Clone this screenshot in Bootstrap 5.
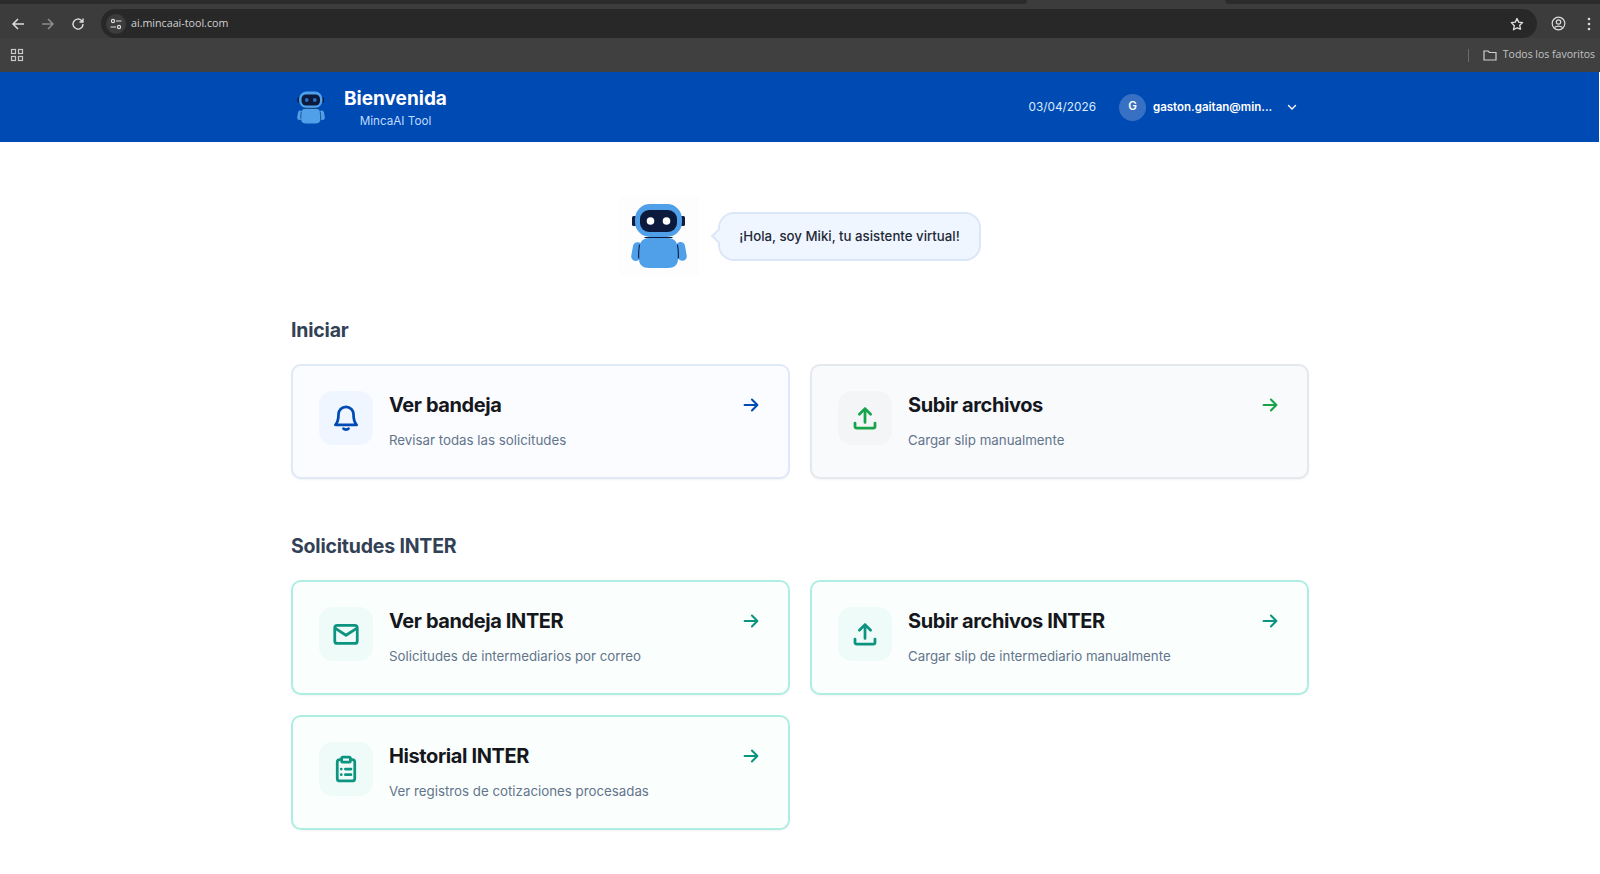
<!DOCTYPE html>
<html lang="es">
<head>
    <meta charset="UTF-8">
    <meta name="viewport" content="width=device-width, initial-scale=1">
    <title>MincaAI Tool</title>
    <link href="https://cdn.jsdelivr.net/npm/bootstrap@5.3.0/dist/css/bootstrap.min.css" rel="stylesheet">
    <style>
        body { font-family: "Inter", "Liberation Sans", sans-serif; background: #fff; height: 874px; overflow: hidden; }

        /* barra del navegador */
        .chrome-tabs { height: 9px; background: #3c3c3c; }
        .chrome-tab-off { height: 4px; background: #2b2b2b; }
        .tab-left { width: 1027px; border-bottom-right-radius: 6px; }
        .tab-right { width: 375px; border-bottom-left-radius: 6px; }
        .chrome-toolbar { height: 29px; background: #3c3c3c; padding-left: 3px; padding-right: 9px; }
        .chrome-bookmarks { height: 34px; background: #404040; padding-left: 10px; padding-right: 5px; font-family: "Open Sans", sans-serif; font-size: 10.500px; color: #c4c4c4; }
        .chrome-btn { width: 30px; display: flex; justify-content: center; color: #dcdcdc; }
        .chrome-url { width: 1436px; height: 29px; background: #282828; border-radius: 15px; margin-left: 8px; padding: 0 13px 0 5px; font-family: "Open Sans", sans-serif; font-size: 10.700px; color: #d2d2d2; }
        .chrome-tune { width: 20px; height: 20px; border-radius: 50%; background: #3c3c3c; margin-right: 5px; }
        .chrome-sep { width: 1px; height: 13px; background: #6a6a6a; margin-right: 14px; }
        .chrome-kebab { margin-left: 21px; }
        .folder-gap { margin-right: 6px; }

        /* cabecera */
        .top-header { height: 70px; background: #004ab3; color: #fff; margin-right: 1px; }
        .top-inner { width: 1018px; margin-left: 291px; padding-right: 11px; }
        .brand-robot { margin-right: 13px; color: #2f6dc0; }
        .brand-text { margin-top: 2px; }
        .brand-title { font-size: 19px; font-weight: 700; line-height: 26px; }
        .brand-sub { font-size: 11.700px; line-height: 17px; margin-top: 1px; color: #bfdbfe; }
        .top-date { font-size: 11.800px; color: #dbeafe; margin-right: 23px; margin-top: 2px; }
        .avatar-circle { width: 27px; height: 27px; border-radius: 50%; background: rgba(255, 255, 255, .22); font-size: 11.500px; font-weight: 600; }
        .user-mail { font-size: 11.500px; font-weight: 600; width: 120px; margin-left: 7px; margin-right: 13px; margin-top: 2px; white-space: nowrap; }

        /* contenido */
        .page-wrap { width: 1018px; margin-left: 291px; padding-top: 55px; }
        .miki-row { margin-bottom: 41px; gap: 19px; }
        .miki-box { width: 80px; height: 78px; background: #fdfdfd; color: #fff; }
        .miki-bubble { position: relative; height: 49px; width: 263px; padding-top: 1px; background: #eff6ff; border: 2px solid #dbe7f8; border-radius: 16px; font-size: 13.250px; font-weight: 500; color: #1f2937; }
        .miki-bubble::before { content: ""; position: absolute; left: -7px; top: 17px; width: 10px; height: 10px; background: #eff6ff; border-left: 2px solid #dbe7f8; border-bottom: 2px solid #dbe7f8; transform: rotate(45deg); }
        .section-title { font-size: 19.500px; font-weight: 700; letter-spacing: -.2px; line-height: 28px; color: #334155; margin: 0 0 20px; }
        .section-gap { margin-top: 53px; }
        .tiles { display: grid; grid-template-columns: 499px 499px; gap: 20px; }
        .tile { border-width: 2px; border-radius: 10px; box-shadow: 0 1px 2px rgba(15, 23, 42, .05); height: 115px; }
        .tile .card-body { padding: 25px 26px 26px; gap: 16px; }
        .tile-blue { background: #fafcff; border-color: #dfe9f8; }
        .tile-gray { background: #f8fafc; border-color: #e5e8ed; }
        .tile-teal { background: #fafffe; border-color: #aeeee2; }
        .tile-icon { width: 54px; height: 54px; border-radius: 14px; flex-shrink: 0; }
        .tile-blue .tile-icon { background: #f0f6ff; color: #004ab3; }
        .tile-gray .tile-icon { background: #f4f5f7; color: #16a34a; }
        .tile-teal .tile-icon { background: #eefbf8; color: #0d9480; }
        .tile-head { font-size: 20px; font-weight: 700; line-height: 28px; color: #15171c; margin: 0 0 10.500px; letter-spacing: -.4px; }
        .tile-desc { font-size: 13.300px; line-height: 21px; color: #64748b; margin: 0; }
        .tile-arrow { margin-top: 3px; }
        .tile-blue .tile-arrow { color: #004ab3; }
        .tile-gray .tile-arrow { color: #16a34a; }
        .tile-teal .tile-arrow { color: #0d9480; }
    </style>
</head>
<body>
<svg width="0" height="0" class="d-block">
    <symbol id="robot" viewBox="1 0 80 78">
        <rect x="14" y="19" width="6" height="10" rx="1.500" fill="#0f1d3f"/>
        <rect x="61" y="19" width="6" height="10" rx="1.500" fill="#0f1d3f"/>
        <rect x="17" y="7" width="47" height="33" rx="15" fill="#4f9fe9"/>
        <rect x="22" y="13" width="37" height="22" rx="9" fill="#0c1a3d"/>
        <circle cx="32.500" cy="24" r="3.800" fill="currentColor"/>
        <circle cx="48.500" cy="24" r="3.800" fill="currentColor"/>
        <rect x="14" y="45" width="9" height="19" rx="4.500" transform="rotate(10 18 55)" fill="#4f9fe9"/>
        <rect x="59" y="45" width="9" height="19" rx="4.500" transform="rotate(-10 63 55)" fill="#4f9fe9"/>
        <path d="M31 41h19c7 0 10 5 10 12v9c0 6-4 9-10 9H31c-6 0-10-3-10-9v-9c0-7 3-12 10-12z" fill="#4f9fe9"/>
        <path d="M27 40.500h27" stroke="#0c1a3d" stroke-width="1.200" stroke-linecap="round"/>
        <path d="M21.500 48c-.8 4-1 8-.8 13M59.500 48c.8 4 1 8 .8 13" fill="none" stroke="#0c1a3d" stroke-width="1.100" stroke-linecap="round"/>
    </symbol>
    <symbol id="arrow" viewBox="0 0 24 24">
        <path d="M5 12h14M13 6l6 6-6 6" fill="none" stroke="currentColor" stroke-width="2.200" stroke-linecap="round" stroke-linejoin="round"/>
    </symbol>
    <symbol id="upload" viewBox="0 0 24 24">
        <path d="M4 16v2.500A1.500 1.500 0 0 0 5.500 20h13a1.500 1.500 0 0 0 1.500-1.500V16M12 15.500V4.500M7.500 9 12 4.500 16.500 9" fill="none" stroke="currentColor" stroke-width="2.200" stroke-linecap="round" stroke-linejoin="round"/>
    </symbol>
</svg>

<div class="chrome-tabs d-flex justify-content-between">
    <div class="chrome-tab-off tab-left"></div>
    <div class="chrome-tab-off tab-right"></div>
</div>
<div class="chrome-toolbar d-flex align-items-center">
    <span class="chrome-btn"><svg width="14" height="14" viewBox="0 0 14 14"><path d="M13 7H2M7 2 2 7l5 5" fill="none" stroke="currentColor" stroke-width="1.500"/></svg></span>
    <span class="chrome-btn opacity-50"><svg width="14" height="14" viewBox="0 0 14 14"><path d="M1 7h11M7 2l5 5-5 5" fill="none" stroke="currentColor" stroke-width="1.500"/></svg></span>
    <span class="chrome-btn"><svg width="14" height="14" viewBox="0 0 14 14"><path d="M12 7a5 5 0 1 1-1.500-3.500L12 5M12 1.500V5H8.500" fill="none" stroke="currentColor" stroke-width="1.400"/></svg></span>
    <div class="chrome-url d-flex align-items-center">
        <span class="chrome-tune d-flex align-items-center justify-content-center">
            <svg width="12" height="12" viewBox="0 0 12 12"><g fill="none" stroke="#dcdcdc" stroke-width="1.200"><circle cx="3" cy="3" r="1.600"/><path d="M6 3h5.500M.5 9H6"/><circle cx="9" cy="9" r="1.600"/></g></svg>
        </span>
        <span>ai.mincaai-tool.com</span>
        <svg class="ms-auto" width="14" height="14" viewBox="0 0 14 14"><path d="m7 1.500 1.700 3.600 3.900.5-2.900 2.700.8 3.900L7 10.800l-3.500 1.900.8-3.900L1.400 5.600l3.900-.5z" fill="none" stroke="#e2e2e2" stroke-width="1.300" stroke-linejoin="round"/></svg>
    </div>
    <svg class="ms-auto" width="15" height="15" viewBox="0 0 15 15"><g fill="none" stroke="#dcdcdc" stroke-width="1.200"><circle cx="7.500" cy="7.500" r="6.300"/><circle cx="7.500" cy="6" r="2.200"/><path d="M3.500 11.500c2-1.800 6-1.800 8 0"/></g></svg>
    <svg class="chrome-kebab" width="4" height="14" viewBox="0 0 4 14"><g fill="#dcdcdc"><circle cx="2" cy="2" r="1.300"/><circle cx="2" cy="7" r="1.300"/><circle cx="2" cy="12" r="1.300"/></g></svg>
</div>
<div class="chrome-bookmarks d-flex align-items-center">
    <svg width="14" height="14" viewBox="0 0 14 14"><g fill="none" stroke="#c8c8c8" stroke-width="1.200"><rect x="1.500" y="1.500" width="4" height="4"/><rect x="8.500" y="1.500" width="4" height="4"/><rect x="1.500" y="8.500" width="4" height="4"/><rect x="8.500" y="8.500" width="4" height="4"/></g></svg>
    <span class="chrome-sep ms-auto"></span>
    <svg class="folder-gap" width="14" height="12" viewBox="0 0 14 12"><path d="M1 2h4l1.500 1.500H13V11H1z" fill="none" stroke="#d0d0d0" stroke-width="1.200"/></svg>
    <span>Todos los favoritos</span>
</div>

<header class="top-header d-flex align-items-center">
    <div class="top-inner d-flex align-items-center">
        <svg class="brand-robot" width="40" height="39"><use href="#robot"/></svg>
        <div class="brand-text text-center">
            <div class="brand-title">Bienvenida</div>
            <div class="brand-sub">MincaAI Tool</div>
        </div>
        <div class="ms-auto d-flex align-items-center">
            <span class="top-date">03/04/2026</span>
            <span class="avatar-circle d-flex align-items-center justify-content-center">G</span>
            <span class="user-mail">gaston.gaitan@min...</span>
            <svg width="12" height="12" viewBox="0 0 12 12"><path d="m2.500 4.500 3.500 3.500 3.500-3.500" fill="none" stroke="#fff" stroke-width="1.400" stroke-linecap="round" stroke-linejoin="round"/></svg>
        </div>
    </div>
</header>

<main class="page-wrap">
    <div class="miki-row d-flex align-items-center justify-content-center">
        <div class="miki-box">
            <svg class="d-block" width="80" height="78"><use href="#robot"/></svg>
        </div>
        <div class="miki-bubble d-flex align-items-center justify-content-center">¡Hola, soy Miki, tu asistente virtual!</div>
    </div>

    <h2 class="section-title">Iniciar</h2>
    <div class="tiles">
        <div class="card tile tile-blue">
            <div class="card-body d-flex">
                <div class="tile-icon d-flex align-items-center justify-content-center">
                    <svg width="30" height="30" viewBox="0 0 24 24"><path d="M12 3a6 6 0 0 0-6 6c0 5-1 7-2.500 8.500h17C19 16 18 14 18 9a6 6 0 0 0-6-6zM10 20.500c.8 1 3.200 1 4 0" fill="none" stroke="currentColor" stroke-width="2.200" stroke-linecap="round" stroke-linejoin="round"/></svg>
                </div>
                <div class="flex-grow-1">
                    <h3 class="tile-head">Ver bandeja</h3>
                    <p class="tile-desc">Revisar todas las solicitudes</p>
                </div>
                <svg class="tile-arrow" width="22" height="22"><use href="#arrow"/></svg>
            </div>
        </div>
        <div class="card tile tile-gray">
            <div class="card-body d-flex">
                <div class="tile-icon d-flex align-items-center justify-content-center">
                    <svg width="30" height="30"><use href="#upload"/></svg>
                </div>
                <div class="flex-grow-1">
                    <h3 class="tile-head">Subir archivos</h3>
                    <p class="tile-desc">Cargar slip manualmente</p>
                </div>
                <svg class="tile-arrow" width="22" height="22"><use href="#arrow"/></svg>
            </div>
        </div>
    </div>

    <h2 class="section-title section-gap">Solicitudes INTER</h2>
    <div class="tiles">
        <div class="card tile tile-teal">
            <div class="card-body d-flex">
                <div class="tile-icon d-flex align-items-center justify-content-center">
                    <svg width="30" height="30" viewBox="0 0 24 24"><rect x="3" y="5" width="18" height="14.500" rx="2" fill="none" stroke="currentColor" stroke-width="2.200"/><path d="m3.500 7.500 8.500 5.500 8.500-5.500" fill="none" stroke="currentColor" stroke-width="2.200" stroke-linejoin="round"/></svg>
                </div>
                <div class="flex-grow-1">
                    <h3 class="tile-head">Ver bandeja INTER</h3>
                    <p class="tile-desc">Solicitudes de intermediarios por correo</p>
                </div>
                <svg class="tile-arrow" width="22" height="22"><use href="#arrow"/></svg>
            </div>
        </div>
        <div class="card tile tile-teal">
            <div class="card-body d-flex">
                <div class="tile-icon d-flex align-items-center justify-content-center">
                    <svg width="30" height="30"><use href="#upload"/></svg>
                </div>
                <div class="flex-grow-1">
                    <h3 class="tile-head">Subir archivos INTER</h3>
                    <p class="tile-desc">Cargar slip de intermediario manualmente</p>
                </div>
                <svg class="tile-arrow" width="22" height="22"><use href="#arrow"/></svg>
            </div>
        </div>
        <div class="card tile tile-teal">
            <div class="card-body d-flex">
                <div class="tile-icon d-flex align-items-center justify-content-center">
                    <svg width="30" height="30" viewBox="0 0 24 24"><g fill="none" stroke="currentColor" stroke-width="2.200" stroke-linecap="round" stroke-linejoin="round"><path d="M8.500 4.500H7A2 2 0 0 0 5 6.500v13a2 2 0 0 0 2 2h10a2 2 0 0 0 2-2v-13a2 2 0 0 0-2-2h-1.500"/><rect x="8.500" y="2.500" width="7" height="4" rx="1"/><path d="M11.500 12H16M11.500 16.500H16M8.200 12h.01M8.200 16.500h.01"/></g></svg>
                </div>
                <div class="flex-grow-1">
                    <h3 class="tile-head">Historial INTER</h3>
                    <p class="tile-desc">Ver registros de cotizaciones procesadas</p>
                </div>
                <svg class="tile-arrow" width="22" height="22"><use href="#arrow"/></svg>
            </div>
        </div>
    </div>
</main>
<script src="https://cdn.jsdelivr.net/npm/bootstrap@5.3.0/dist/js/bootstrap.bundle.min.js"></script>
</body>
</html>
